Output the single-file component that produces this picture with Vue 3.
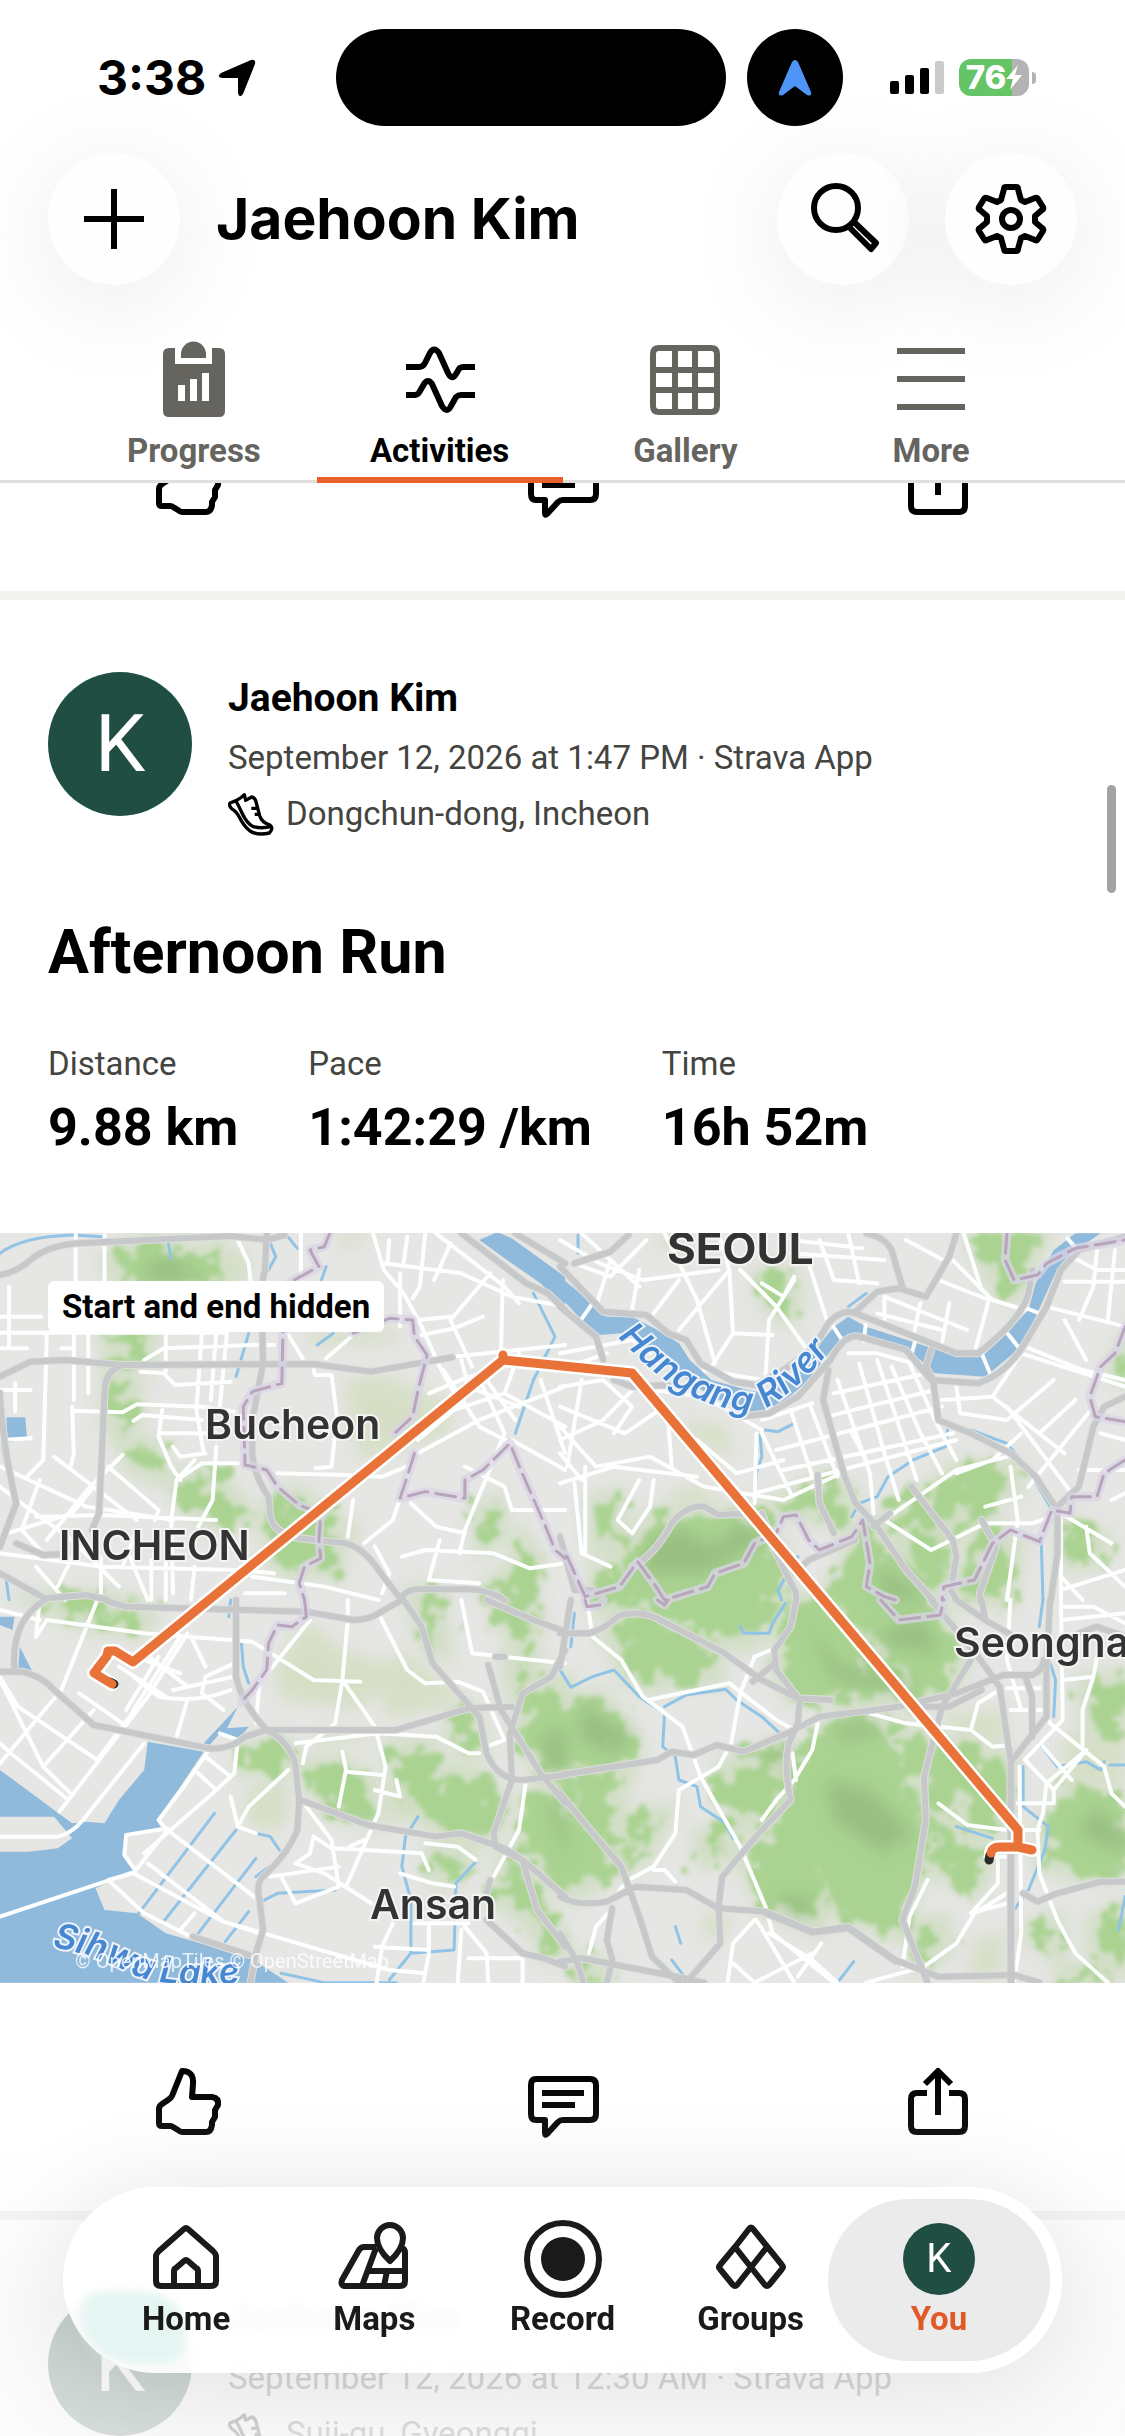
<template>
  <div class="app">
    <!-- Status bar -->
    <div class="status">
      <div class="status-left">
        <span class="clock">3:38</span>
        <svg class="loc" viewBox="0 0 38 38" aria-hidden="true">
          <path d="M33 1Q38 0 37 5L25 35Q21 40 20 34V19H4Q-2 18 3 14Z" />
        </svg>
      </div>
      <div class="status-mid">
        <div class="island"></div>
        <div class="nav-dot">
          <svg viewBox="0 0 34 36" aria-hidden="true">
            <path d="M14 2Q17-2 20 2L33 32Q34 37 29 35L17 26 5 35Q0 37 1 32Z" fill="#4e95f7" />
          </svg>
        </div>
      </div>
      <div class="status-right">
        <svg class="signal" viewBox="0 0 54 33" aria-hidden="true">
          <rect x="0" y="20" width="9" height="13" rx="2" />
          <rect x="15" y="14" width="9" height="19" rx="2" />
          <rect x="30" y="7" width="9" height="26" rx="2" />
          <rect x="45" y="0" width="9" height="33" rx="2" fill="#cbcbcb" />
        </svg>
        <div class="battery">
          <span>76</span>
          <svg viewBox="0 0 16 25" aria-hidden="true"><path d="M12 0L0 14H7L4 25 16 10H9Z" fill="#fff" /></svg>
        </div>
        <div class="battery-tip"></div>
      </div>
    </div>

    <!-- Header -->
    <header class="header">
      <button class="round" type="button" aria-label="Add">
        <svg class="icon" viewBox="0 0 72 72"><path d="M36 6V66M6 36H66" /></svg>
      </button>
      <h1>Jaehoon Kim</h1>
      <button class="round" type="button" aria-label="Search">
        <svg class="icon" viewBox="0 0 72 72">
          <circle cx="29" cy="25" r="22" />
          <path d="M48 40L69 60 64 66 43 45" />
        </svg>
      </button>
      <button class="round" type="button" aria-label="Settings">
        <svg class="icon" viewBox="0 0 72 72">
          <path d="M31 4H41Q43 4 43 6L46 17 50 19 60 15Q62 14 63 16L68 24Q69 26 67 27L60 33V39L67 45Q69 46 68 48L63 56Q62 58 60 57L50 53 46 55 43 66Q43 68 41 68H31Q29 68 29 66L26 55 22 53 12 57Q10 58 9 56L4 48Q3 46 5 45L12 39V33L5 27Q3 26 4 24L9 16Q10 14 12 15L22 19 26 17 29 6Q29 4 31 4Z" />
          <circle cx="36" cy="36" r="9" />
        </svg>
      </button>
    </header>

    <!-- Tabs -->
    <nav class="tabs">
      <button
        v-for="tab in tabs"
        :key="tab.name"
        type="button"
        class="tab"
        :class="{ active: tab.name === activeTab }"
        @click="activeTab = tab.name"
      >
        <svg class="tab-icon" viewBox="0 0 78 78" aria-hidden="true">
          <path :d="tab.path" :class="tab.solid ? 'solid' : 'line'" fill-rule="evenodd" />
        </svg>
        <span>{{ tab.name }}</span>
      </button>
    </nav>

    <!-- Feed -->
    <main class="feed">
      <div class="actions previous">
        <button v-for="a in actions" :key="a.name" type="button" :aria-label="a.name">
          <svg class="icon" viewBox="0 0 72 72"><path :d="a.path" /></svg>
        </button>
      </div>

      <article v-for="post in posts" :key="post.id" class="card">
        <div class="author">
          <div class="avatar">K</div>
          <div class="meta">
            <strong>Jaehoon Kim</strong>
            <p>{{ post.date }}</p>
            <p class="place">
              <svg class="shoe" viewBox="24 21 138 132" aria-hidden="true">
                <path d="M30 54L50 46Q62 40 73 29L77 46 95 36Q106 38 109 54L119 92Q125 112 150 120 162 130 148 144 112 152 90 138 70 122 58 96 48 78 36 72 26 64 30 54ZM48 48Q56 62 66 84 80 114 98 124 122 132 152 125M94 70H112M104 88H118" />
              </svg>
              {{ post.place }}
            </p>
          </div>
        </div>

        <template v-if="post.title">
          <h2>{{ post.title }}</h2>
          <dl class="stats">
            <div v-for="s in post.stats" :key="s.label">
              <dt>{{ s.label }}</dt>
              <dd>{{ s.value }}</dd>
            </div>
          </dl>

          <div class="map">
            <span class="hidden-badge">Start and end hidden</span>
            <svg viewBox="0 0 1125 750" role="img" aria-label="Route map">
              <defs>
                <filter id="rough" x="-5%" y="-5%" width="110%" height="110%" color-interpolation-filters="sRGB">
                  <feTurbulence type="fractalNoise" baseFrequency="0.04" numOctaves="4" seed="4" />
                  <feDisplacementMap in="SourceGraphic" scale="64" xChannelSelector="R" yChannelSelector="G" />
                  <feGaussianBlur stdDeviation="2" />
                </filter>
                <filter id="soft"><feGaussianBlur stdDeviation="8" /></filter>
                <path id="hangang" d="M618 104C660 148 690 172 754 180" />
                <path id="river" d="M766 175C795 158 815 138 848 94" />
                <path id="sihwa" d="M52 714Q96 722 130 740T260 748" />
              </defs>
              <rect width="1125" height="750" fill="#e6e6e4" />
              <g v-for="layer in layers" :key="layer" :class="layer" :filter="layerFilter[layer]">
                <g v-for="(tile, i) in tiles" :key="i" :transform="tile.at">
                  <path :d="tile[layer]" />
                </g>
              </g>
              <g class="city">
                <text x="667" y="31" class="big">SEOUL</text>
                <text x="205" y="206">Bucheon</text>
                <text x="59" y="327">INCHEON</text>
                <text x="954" y="424">Seongnam</text>
                <text x="370" y="686">Ansan</text>
              </g>
              <g class="water-name">
                <text><textPath href="#hangang">Hangang</textPath></text>
                <text><textPath href="#river">River</textPath></text>
                <text><textPath href="#sihwa">Sihwa Lake</textPath></text>
              </g>
              <text class="credit" x="75" y="735">© OpenMapTiles © OpenStreetMap</text>
              <path class="casing" :d="route" />
              <path class="hidden-part" d="M110 449L114 451M990 622L989 627" />
              <path class="route" :d="route" />
            </svg>
          </div>

          <div class="actions">
            <button v-for="a in actions" :key="a.name" type="button" :aria-label="a.name">
              <svg class="icon" viewBox="0 0 72 72"><path :d="a.path" /></svg>
            </button>
          </div>
        </template>
      </article>
    </main>

    <div class="scrollbar"></div>
    <div class="fade"></div>

    <!-- Bottom navigation -->
    <nav class="dock">
      <div class="tint"></div>
      <a
        v-for="item in dock"
        :key="item.name"
        href="#"
        :class="{ current: item.name === 'You' }"
      >
        <svg v-if="item.path" class="icon" viewBox="0 0 72 72" aria-hidden="true">
          <path :d="item.path" />
          <circle v-if="item.name === 'Record'" cx="36" cy="36" r="22" fill="#1a1a1a" stroke="none" />
        </svg>
        <div v-else class="avatar small">K</div>
        <span>{{ item.name }}</span>
      </a>
    </nav>
  </div>
</template>

<script setup>
import { ref } from 'vue';

const activeTab = ref('Activities');

const tabs = [
  {
    name: 'Progress',
    solid: true,
    path: 'M14 7H20V23H57V7H64Q70 7 70 13V70Q70 76 64 76H14Q8 76 8 70V13Q8 7 14 7ZM26 17V13A12.5 12.5 0 0 1 51 13V17ZM23 44H30V60H23ZM35 38H42V60H35ZM47 32H54V60H47Z',
  },
  {
    name: 'Activities',
    path: 'M5 26H18Q22 26 24 22L29 12Q33 5 38 12L47 32Q51 40 55 33L58 28Q59 26 63 26H74M5 54H14Q17 54 19 50L23 43Q27 37 31 43L41 65Q46 73 50 65L55 56Q57 54 60 54H74',
  },
  {
    name: 'Gallery',
    path: 'M13 7H65Q71 7 71 13V65Q71 71 65 71H13Q7 71 7 65V13Q7 7 13 7ZM7 29H71M7 49H71M29 7V71M49 7V71',
  },
  { name: 'More', path: 'M5 10H73M5 38H73M5 66H73' },
];

const actions = [
  {
    name: 'Like',
    path: 'M7 42Q7 39 10 37L16 33Q19 31 20 29L30 4Q42 4 41 17L40 30H60Q67 31 66 38L63 43V50L60 55V58Q59 65 54 65H30Q28 65 26 63L21 60Q20 59 18 59H10Q7 59 7 56Z',
  },
  {
    name: 'Comment',
    path: 'M9 12H63Q69 12 69 18V47Q69 53 63 53H36Q33 53 31 55L20 67Q18 69 18 66V53H9Q4 53 4 47V18Q4 12 9 12ZM15 26H57M15 38H48',
  },
  {
    name: 'Share',
    path: 'M25 26H15Q9 26 9 32V59Q9 65 15 65H57Q63 65 63 59V32Q63 26 57 26H47M36 48V5M23 17L36 4 49 17',
  },
];

const dock = [
  {
    name: 'Home',
    path: 'M34 6Q36 4 38 6L63 28Q66 31 66 33V58Q66 63 61 63H11Q6 63 6 58V33Q6 31 9 28ZM24 63V48Q24 46 26 45L34 38Q36 36 38 38L46 45Q48 46 48 48V63',
  },
  {
    name: 'Maps',
    path: 'M38 24H26Q23 24 21 27L4 57Q2 63 8 63H62Q67 63 67 58V30Q67 26 64 25M52 38Q39 26 39 15A13 13 0 0 1 65 15Q65 26 52 38ZM38 25L24 63M31 48H67M49 48L46 63',
  },
  { name: 'Record', path: 'M36 0A36 36 0 1 1 36 72A36 36 0 1 1 36 0Z' },
  {
    name: 'Groups',
    path: 'M20 24L34 6Q36 3 38 6L67 42Q69 44 67 46L54 62Q52 64 50 62L20 24M52 24L22 62Q20 64 18 62L5 46Q3 44 5 42L20 24',
  },
  { name: 'You' },
];

const posts = [
  {
    id: 1,
    date: 'September 12, 2026 at 1:47 PM · Strava App',
    place: 'Dongchun-dong, Incheon',
    title: 'Afternoon Run',
    stats: [
      { label: 'Distance', value: '9.88 km' },
      { label: 'Pace', value: '1:42:29 /km' },
      { label: 'Time', value: '16h 52m' },
    ],
  },
  {
    id: 2,
    date: 'September 12, 2026 at 12:30 AM · Strava App',
    place: 'Suji-gu, Gyeonggi',
  },
];

const route = 'M112 451L94 440 107 423 108 418 115 418 133 429 503 127V122V127L632 140 1018 597V614L1032 617 1018 614H1000Q992 614 991 620';

// Map layers, from the ground up
const layers = ['pale', 'forest-haze', 'forest', 'shade', 'water', 'stream', 'street', 'highway-edge', 'highway', 'border-glow', 'border'];
const layerFilter = {
  pale: 'url(#soft)',
  'forest-haze': 'url(#soft)',
  forest: 'url(#rough)',
  shade: 'url(#soft)',
};

const tile = (at, t) => ({
  at,
  ...t,
  'forest-haze': t.forest,
  'highway-edge': t.highway,
  'border-glow': t.border,
});

const tiles = [
  // north-west
  tile('translate(0 -13) scale(.3604 .3333)', {
    pale: 'M930 40H1030L960 95ZM950 490L1040 460 1240 540 1250 640 1000 720ZM900 880L1000 900 1000 980ZM620 80L700 110 690 180 620 180ZM850 330H1120L1080 370 860 370Z',
    forest: 'M300 130L370 75 480 70 550 110 600 75 600 140 630 190H340ZM290 335H420L410 425 310 400ZM310 460L380 500 360 560 380 590 330 650 300 590ZM360 675L430 680 450 770 365 740ZM500 780L560 760 630 800 690 900 580 910 500 830ZM750 850L830 820 900 890 940 980 930 1060 880 1040 810 1060 750 1010ZM1330 880L1375 850 1390 940 1340 980ZM1350 1110L1430 1040 1450 960 1490 1030 1460 1150 1380 1140ZM130 1140H300L400 1170H200ZM1150 1120H1220V1145H1150Z',
    shade: 'M410 130L480 110 560 180H410Z',
    water: 'M1330 60L1380 36 1420 55 1568 170V270L1500 190 1400 115ZM18 592H70L75 655 18 668Z',
    stream: 'M0 100Q60 50 200 45L285 50M465 60L475 115M750 70L765 110 745 150M795 45L825 85M905 140L890 185M925 340L880 375M655 470L690 340M0 620L10 700 40 850M15 1060L25 1140M1480 220L1540 350 1480 480 1430 640',
    street: 'M130 340L120 720 75 770M0 290H115M0 338H630M25 200V385M42 490V575M0 510H85M210 40V180M290 45V180M205 335V540M170 385H205V340M200 572L340 577 380 553 560 560 650 575M370 603L395 585 560 600M245 340V520M400 420L455 385 700 375 760 375M390 455L455 460 485 495 640 485M460 340V455M560 340L545 570 565 700M600 340L585 540M630 335L610 560M450 640H600M450 570L440 650 475 740 500 780M200 560L205 700 195 745M660 60L690 130 695 180M835 40V190M1035 40L1065 150 1120 220 1170 320 1220 440 1280 560M1110 160V320M1065 130L1280 160 1420 230 1568 260M1180 40L1165 200 1145 235M1080 60L1075 130M1130 50L1120 130M1360 160L1250 300 1310 440M1210 40L1400 200 1440 250M1250 70L1205 180M1395 180L1390 400M1255 410L1568 375M1170 345L1260 325 1340 290M1160 300L1250 290M800 345L840 415M980 345L905 415M870 450L875 465 920 465 935 590 920 740 875 745M770 760L960 765 1060 770 1140 735M1160 700L1330 600 1568 500M1190 520L1290 475 1400 440M980 840L965 950M1140 850L1210 920 1290 940M1340 500L1400 640 1290 930 1275 1000M1010 970L1090 900 1140 740M1115 1010L1180 990 1370 1000 1470 1045 1568 1030M1040 980L1080 1060 1060 1120M0 740L100 790 240 860 480 900M0 800L60 850 200 960 330 1100M110 780L60 930 120 1000M300 740L440 870 430 900M340 705L250 800 130 960M150 710L380 900M540 720L490 780 475 900 480 1120M490 780L560 730H660M600 680L590 840 550 920M100 890L280 885 600 900M0 1000L280 1040 660 1050 760 1060M360 1010L410 1140M420 1020V1140M460 1000V1140M540 1040L530 1140M20 940L200 880 260 800M680 1120H790M100 1040L180 1140M700 1070L900 1100 1050 1140M0 385H75M0 660L85 655M480 680L500 710 570 700M1420 660L1568 750M1160 660L1260 570 1400 520M1290 740L1400 800 1420 870 1568 870M1500 480L1568 700M1430 600L1350 480M1230 450L1330 620 1420 670M1280 420L1300 500 1440 560M1440 400L1400 520 1568 620M1220 960L1190 1080 1330 1090M380 930L340 1040M220 970L160 1100M280 1010V1130',
    highway: 'M0 165Q50 155 90 115 140 75 220 70L640 48 740 60 790 45M740 40L735 150 725 200 730 430 700 600V700Q705 770 745 830L750 890Q760 940 830 955L960 970Q1010 985 1050 1050L1110 1135M0 470L85 425 180 420 340 435 870 432 1030 455 1255 412M340 435Q290 450 290 520L275 880 255 930M1280 40L1340 90 1460 190 1520 220 1568 270M1430 40L1568 130M0 1060L125 1135M45 970L120 1005 165 1003M0 520Q5 660 45 850L0 980M1110 1135Q1130 1108 1160 1108H1300Q1360 1110 1400 1140M125 1135L240 1125 300 1140',
    border: 'M915 40L900 80 860 90 885 140 850 160 800 190 785 335 782 490 700 515 675 560 680 735 740 750 770 800 830 855 890 880 885 960 890 1015 845 1040 830 1090 845 1140M980 340L1080 295 1145 300 1150 350 1185 405 1160 510 1145 590 1095 640M1150 700L1130 770 1110 835 1180 815 1290 835 1290 780 1340 750 1415 670 1445 750 1510 910 1540 990 1568 1015',
  }),
  // north-east
  tile('translate(560 -13) scale(.3604 .3333)', {
    pale: 'M960 930L1160 880 1180 960 1000 1000ZM300 820L400 790 420 860 300 860ZM330 600L460 620 480 720 380 660ZM250 60L340 40 330 110Z',
    forest: 'M190 980L260 890 350 890 540 880 600 980 620 1060 600 1160 120 1160 160 1080ZM100 850L160 830 175 1000 100 980ZM600 850L740 780 810 820 780 900 640 880ZM900 900L1000 830 1100 750 1250 740 1260 810 1150 880 980 940ZM555 175L600 160 650 180 640 290 590 270ZM1150 60L1230 40H1340L1310 120 1270 230 1200 180ZM800 950L860 930 970 1060 1040 1160H760L740 1120 800 1050ZM960 960L1060 960 1090 1070 1010 1110ZM1200 920L1270 970 1240 1140H1110L1130 1060ZM1400 900L1510 960 1490 1020 1410 1030ZM1530 450L1575 370V480ZM100 1060H150V1130H100Z',
    shade: 'M240 980L330 920 420 980 520 900 560 960 400 1060 240 1060ZM880 1040L960 1090 1020 1140H900Z',
    water: 'M0 170L90 250 130 290 200 290 270 330 330 370 360 420 420 480 520 510 570 520 640 470 700 400 760 320 800 290 850 320 1020 380 1170 410 1220 360 1300 270 1320 190 1370 90 1430 40H1500L1420 100 1370 170 1320 290 1280 380 1180 470 1040 460 1000 420 960 395 860 350 800 345 760 380 690 480 600 565 530 575 420 530 330 460 260 390 170 340 110 345 60 300 0 230Z',
    stream: 'M570 630L605 635 650 610M555 645L560 710 545 760 540 830M1075 630L1070 680 980 720 910 770 880 830 830 850 810 890M1140 630L1240 670 1300 750 1360 860M1335 950L1340 1140M660 1010L605 1110 615 1140M50 45V100M800 260L850 220',
    street: 'M90 250L55 305M755 315L780 355M848 315L843 365M985 365L975 405M1172 405L1195 465M1238 335L1278 390M1288 262L1335 282M1408 55L1440 95M640 570L700 770M695 560L770 770M770 480L860 760 870 880M830 430L900 700 940 840M880 420L990 780M920 440L1000 640 1060 760M970 430L1040 600 1100 720M800 400L880 400 980 430M560 600L700 550M600 690L1060 560M620 750L1090 640M760 520L1020 460M740 590L1040 510M540 820L780 750 1100 660M545 640L540 850M560 640L640 820M810 640L850 720M1060 540L1200 530 1280 400 1568 500M1100 500L1110 580 1240 600 1370 480M1240 560L1420 820M1200 530L1400 700M1290 380L1450 450 1568 480M1350 260L1568 320M1400 185H1568M1490 90L1480 200 1440 300M1568 150H1490L1420 110M1430 540L1330 640M1480 560L1300 800M1280 640L1200 720 1100 760M1400 300L1460 420M1540 90L1520 300M0 60L110 130 230 180 440 150M60 40L220 200M140 120L100 260M220 150L200 270M290 40L380 240 430 430M440 40L470 150 400 240 330 330M470 150L480 340 590 345M500 150L600 260 680 380M560 190L620 230 650 170M650 180L580 300 570 470M720 60L760 180 880 190M640 100L900 120M800 40L830 190M690 130L740 300M640 60L840 85M900 230L1130 330M880 280L1060 330M1000 250L980 350M900 240V310M1080 110L1200 240 1290 270M1120 40L1170 210M960 60L1080 130M1050 180L1190 240 1150 400M1080 250L1060 370M400 450L560 480M240 60L140 170 40 130M330 180L260 280M480 340L420 440M0 400L200 360 250 400M0 450L130 400M0 500L120 480 200 560 150 640M0 560L180 640 290 560M60 480L20 740M0 620L100 740 250 710 400 800 620 840M300 600L310 740M260 510L400 530 560 630M0 790L150 740 380 770M0 660L120 600 210 500M0 700L60 780M40 790L60 1000 140 1040M70 740V1000M220 780L160 900 200 940 250 860 260 780M380 660L490 760 620 720M620 840L780 760M1100 750L900 900 1030 990 1180 910H1310L1390 880 1530 970M1100 750L1240 710M1250 740L1270 900 1240 1140M1180 860L1280 830M1390 1110L1568 1050M1460 920L1470 1000 1568 1100M1440 750H1568M1500 640L1568 660M1390 880V1140M1390 1070L1450 1140M1530 840L1568 820',
    highway: 'M0 140L120 275 240 285 300 340 350 360 390 430 480 485 545 495 620 450 700 390 745 310Q780 265 820 280L1100 400H1160Q1280 300 1300 220L1310 150M0 260L100 350 120 420M500 590L580 580 660 530 750 420Q790 340 830 350L960 390 1030 480 1160 490Q1240 460 1290 370L1350 260 1390 150 1440 90 1568 50M1030 390L1015 440 1035 480 1050 600 1140 640 1250 700 1320 770 1380 870M1100 40L1080 110 1015 230 940 205 880 215 820 275M850 40Q900 50 920 90L950 200M40 130L140 95 190 45M745 450L730 540 790 770 820 850 880 920 960 1050 1035 1140M715 765L720 850 760 940M975 800L1090 960 1100 1010 1085 1110 1100 1140M1170 900L1210 980 1165 1120V1140M1568 530L1510 560 1480 620 1440 800 1380 860V1000L1362 1140M915 880L870 920M150 480L200 500 300 495M200 1040Q260 1010 310 910 350 855 400 860L440 885 520 880M560 880L600 1000 655 1120V1140M820 960L690 1020 650 1060M0 950L40 1110H90',
    border: 'M1240 40L1235 120 1260 180 1325 165 1350 130 1430 85 1568 60M1568 320L1540 400 1500 440 1470 530 1485 590 1568 605M1568 720L1510 760 1490 830 1420 830 1415 880 1365 870 1330 965 1250 930 1200 970 1150 1080 1065 1100 1060 1140M930 1140L900 1130 850 1100 860 1030 840 900 810 950 720 990 690 960 655 885 620 890 600 940 540 970 510 1030 430 1060 410 1100 290 1140 260 1090 215 1025 165 1100 70 1130 20 1010 0 1000',
  }),
  // south-west
  tile('translate(0 367) scale(.3604 .3333)', {
    pale: 'M680 570L800 540V650L760 700 680 660ZM850 60L950 150 1100 200 1000 330 780 300 760 200ZM1030 200L1130 160 1290 300 1080 360ZM870 400L1030 390 1030 420 870 440ZM1060 580L1150 580 1150 660H1060Z',
    forest: 'M110 5L230 0 300 40 410 50 400 85 270 80 180 45ZM690 450L780 425 810 490 740 515 680 495ZM845 500L940 490 1030 540 1030 660 900 620ZM1090 440L1190 435 1200 540 1280 500 1390 590 1360 710 1230 700 1120 600ZM1260 350L1310 340 1330 450 1260 420ZM1150 0H1210L1230 150 1180 120ZM1370 0H1470L1490 80 1440 150 1400 60ZM1410 190L1480 170 1490 230 1420 260ZM1450 290L1568 250V500L1500 520 1430 390ZM1200 760L1300 770 1260 840 1200 830ZM1460 600L1568 560V860L1450 740ZM1400 780L1460 820 1568 1050 1520 1060 1460 950 1380 900Z',
    shade: 'M1500 400L1568 390V510H1520ZM1520 600L1568 650V780Z',
    water: 'M0 510L200 670 240 665 290 670 330 600 400 510 410 425 565 455 500 560 435 660 450 690 350 705 345 765 375 810 265 865 290 930 380 940 460 1000 690 1070 800 1148H0V755H80L160 745 200 715 150 650H0ZM565 430L660 320 630 385 690 380 665 415 610 400 570 450ZM0 50H40L35 90 0 75ZM55 140L90 215H50Z',
    stream: 'M595 640L385 940M655 690L450 970M710 775L550 1000M690 935L625 1025M670 130L675 200 690 250M725 905L770 880 930 870M1160 650L1125 710 1115 800 1140 900V1060L1080 1140M1140 1060L1260 1050 1265 850 1320 785M710 700L750 710 775 750M640 0L635 50M710 830L760 790M780 1120L900 1148H1100',
    street: 'M0 950L375 815M0 230L50 320 270 480M0 240L120 500 200 585M0 430L30 460 190 600M0 490L170 270 270 0M220 280L340 370M120 500L260 330M270 480L380 320M165 635L410 290 520 100M0 710H160Q200 700 230 660L400 430M100 110L130 60 400 100 700 125 870 240 1000 245M100 110L110 0M0 30L110 60M400 180L500 220M370 230L440 290Q550 310 640 270M330 200L460 290M440 170L350 330M500 110L370 330M390 150L520 260M520 300L490 410M650 190L570 230 560 280 620 330M530 110L570 200M650 230L480 270M860 60L720 250 710 370M965 0V60L950 240 1040 380 1070 500 1050 640 960 860M1050 40L1130 210 1180 250 1270 245 1340 275 1400 420 1350 440M1280 0L1310 160 1568 190M820 430L1050 400 1210 410 1300 460H1330M950 455L960 510 940 620M960 515L1060 525M1100 540L1110 590 1040 570M580 450L510 560 440 660 465 690 370 820 620 965 1080 1110 1180 1120M465 690L705 890M610 400L660 420 650 520 590 580 400 760M570 470L640 530M540 510L600 570M800 510L740 570 690 620 660 680 640 590M660 680L710 700M850 620L920 720 940 860 820 910 780 830M920 745L870 710 860 760 820 790M820 790L900 820 1030 910M750 830L940 800M930 745L1170 760 1190 810M1110 820L1200 850 1260 860M370 820L300 840 400 940 530 1010M465 685L350 705 345 765 375 810M410 790L620 965 720 1000M540 940L500 990M1180 730L1270 740 1320 780M1460 540L1440 690 1370 830M1090 970L1060 1040 1045 1148M1190 970V1060L1175 1148M1290 980L1350 1060 1355 1148M1150 970H1300M1300 1075H1450V1148M1040 1040L1190 1050M1280 990L1270 1148M950 240L930 370 850 440 840 490M1010 720L970 740',
    highway: 'M0 215H60Q120 230 150 270L260 375 580 445Q640 450 680 410L740 390H1100L1300 325 1420 320M40 210Q30 60 125 0M300 5L350 20 850 35 980 60Q1020 60 1050 40L1115 0M655 0V230Q670 310 740 390 810 430 820 500L830 600 825 690Q800 760 730 830 710 850 720 900L730 990 710 1060 695 1148M835 600L1020 675 1210 710 1280 700 1400 745 1450 780 1568 890M1120 0L1170 80 1200 190 1330 350 1350 460Q1380 540 1450 540L1568 525M1355 195L1390 330 1500 520 1568 610M1350 0L1480 60 1568 95M1568 150L1530 230 1450 280 1415 400 1420 540 1370 700 1375 740 1450 780 1490 930 1568 1040M535 1010L690 1065M1350 960L1450 1060 1510 1075 1568 1100M1375 170H1400M1360 840L1350 880',
    border: 'M845 0L850 50 810 80 770 75 745 130 740 210 700 270 670 305',
  }),
  // south-east
  tile('translate(560 367) scale(.3604 .3333)', {
    pale: 'M390 940L480 950 450 1020 400 1010ZM1060 340L1240 330 1240 430 1100 420ZM1400 400L1568 420 1568 560 1400 540ZM1150 1020L1230 1000 1230 1130 1130 1130ZM480 90L560 90 540 160 480 160Z',
    forest: 'M650 500L740 380 860 350 930 390 960 500 980 400 1030 430 1010 540 930 590 1010 620 980 850 940 1000 820 960 770 930 740 830 710 980 580 920 510 790 640 620ZM520 480L620 440 630 580 520 680 450 590 450 500ZM130 100L170 50 260 40 440 150 430 240 350 230 260 260 190 230ZM250 0H630L590 80 480 110 420 120ZM640 0H740L990 300 650 290 600 200ZM760 0H1020L1120 180 1060 290 1000 290 880 130ZM0 260L60 330 110 290 200 400V480L0 520ZM0 540L190 500 150 640 170 770 80 690ZM0 590L80 690 160 800 50 880 0 850ZM200 660L290 640 240 760 180 790ZM390 710L460 690 480 750 400 780ZM1050 430L1250 480 1240 660 1180 690 1030 580ZM1010 640L1130 700 1190 760 1160 870 1020 800ZM1350 660L1420 550 1568 620V820L1440 820 1340 790ZM1450 250L1568 230V400L1470 390ZM980 980L1060 970V1060L1000 1090ZM1480 970L1568 930V1110L1490 1070ZM1300 1000L1370 960 1380 1060ZM60 1100H120V1148H60ZM1400 1120H1500V1148H1400Z',
    shade: 'M740 540L860 570 980 700 900 760 760 660ZM680 60L780 200 960 230 980 280 760 240ZM560 450L620 440V520ZM60 310L200 410 150 460 60 420ZM880 100L1000 60 1060 160 920 140ZM1480 620L1568 700 1568 760 1440 700ZM640 880L700 900 690 960 600 910ZM760 380L860 370 900 400 780 420Z',
    water: '',
    stream: 'M0 210L30 262 90 230 150 210 220 290 290 340 285 440 320 470 330 540 380 560 390 620 460 670 480 715M290 320L350 285 460 268 490 300 560 350 620 410M500 80L510 100H580L590 70 625 10M1360 190L1375 240 1370 350M1330 430L1380 500 1460 485 1500 510 1510 485M1525 495H1568M1285 500V620L1355 680 1345 750 1300 870 1260 930M1100 680L1200 715M320 980L335 1030M310 1080L345 1130M770 1148L815 1085M1568 890L1550 990M1340 0L1330 80M40 40L30 140',
    street: 'M75 0L90 110 170 180 230 290 340 380 390 530 500 740 570 920 590 1000 760 1148M245 300L470 250 600 360 640 385M585 150L540 170 500 280 475 430 440 500 330 570 320 700 260 800 190 840 165 870M260 810L290 810 320 845M715 370L700 450 650 540 600 600 560 660M645 460L655 540M860 340L960 370 1140 390 1200 440 1250 435M1140 390L1160 310 1220 270M1050 610L1130 675 1240 690 1330 690M1275 500L1280 1000 1260 1148M1390 0L1395 360 1290 480M1360 370L1510 500 1530 580 1568 620M1290 480L1370 570 1460 450M1460 450L1350 550 1340 640 1325 690 1330 820 1380 960 1430 1060 1520 1148M1340 440L1420 540M1395 240L1480 230 1450 330V440M1480 230L1490 170M1240 880L1150 940 1100 1030 1010 1100 850 1148M1215 780V850L1140 940 1240 910M1020 840L970 950 950 1100M540 960L480 1030 465 1148M545 960L650 1148M480 1090L540 1148M700 1060L540 1148M580 1000L700 1080 770 1148M725 1030L660 1130M150 920L100 980 80 1060M1390 60L1568 40M1390 20H1480L1568 70M1250 0L1240 180 1280 330M1250 330H1340L1360 370M1240 265H1330M1270 610H1370V570M1240 770H1180',
    highway: 'M0 100H80Q120 90 160 50 200 30 260 50L450 155 560 240 660 295 750 300M655 0L640 80 595 150 600 210 665 300 660 370 635 430Q620 500 640 600L560 690 450 830 440 920 445 1030 350 1148M595 190L535 245M0 525L270 480 310 455 370 465 435 435 510 455 640 395 720 350 940 320 1100 280 1230 225H1310Q1340 210 1342 180M1030 0L1160 170 1220 260 1250 480V1148M1252 480V1148M1170 0L1180 60 1260 110M1100 0L1180 60M1140 180L1060 320 1010 530 1015 660 985 860 950 960 1020 1148M1360 0L1350 200V350L1255 480M1290 225L1310 290V410M1000 320H1080L1170 270M0 580L80 685 170 800 220 950 255 1070 330 1148M0 890Q50 920 130 905L210 860 350 870 440 925 570 935 700 995 800 980 930 1080 1050 1130 1260 1125 1330 1148M570 940L700 998 800 985 930 1084M0 1000L45 1080 65 1148M0 1085L60 1075 300 1125 400 1148M145 925L130 1020 145 1080 130 1148M1285 880L1325 905 1380 880 1500 845H1568M0 200L30 0M1440 100L1490 80 1568 110',
    border: 'M70 0L75 20 110 15 120 0M270 0L290 15 300 0M890 0L940 60 1055 45 1065 0',
  }),
];
</script>

<style>
body {
  margin: 0;
  background: #fff;
}
</style>

<style scoped>
.app {
  position: relative;
  display: flex;
  flex-direction: column;
  height: 100vh;
  overflow: hidden;
  background: #fff;
  color: #000;
  font-family: Roboto, "Noto Sans", sans-serif;
}

button {
  border: 0;
  padding: 0;
  background: none;
  color: inherit;
  font: inherit;
  cursor: pointer;
}

p, h1, h2, dl, dd {
  margin: 0;
}

.icon {
  display: block;
  width: 72px;
  height: 72px;
  overflow: visible;
  fill: none;
  stroke: #000;
  stroke-width: 6;
  stroke-linejoin: round;
}

/* Status bar */
.status {
  display: grid;
  grid-template-columns: 336fr 507px 282fr;
  align-items: center;
  flex: none;
  height: 97px;
  padding: 29px 0 27px;
  font-family: Inter, sans-serif;
}

.status-left,
.status-mid,
.status-right {
  display: flex;
  align-items: center;
}

.status-left {
  gap: 12px;
  padding-left: 97px;
}

.clock {
  font-size: 48px;
  line-height: 60px;
  font-weight: 700;
}

.loc {
  width: 38px;
  height: 38px;
}

.status-mid {
  gap: 21px;
}

.island {
  width: 391px;
  height: 97px;
  border-radius: 49px;
  background: #000;
}

.nav-dot {
  display: flex;
  align-items: center;
  justify-content: center;
  width: 96px;
  height: 97px;
  border-radius: 50%;
  background: #000;
}

.nav-dot svg {
  width: 34px;
  height: 36px;
}

.status-right {
  padding-left: 47px;
}

.signal {
  width: 54px;
  height: 33px;
  margin-right: 15px;
}

.battery {
  display: flex;
  align-items: center;
  justify-content: center;
  width: 70px;
  height: 37px;
  border-radius: 12px;
  background: linear-gradient(90deg, #65c466 53px, #b3b3b3 53px);
  color: #fff;
  font-size: 33px;
  line-height: 37px;
  font-weight: 800;
}

.battery svg {
  width: 16px;
  height: 25px;
}

.battery-tip {
  width: 4px;
  height: 12px;
  margin-left: 3px;
  border-radius: 0 6px 6px 0;
  background: #b3b3b3;
}

/* Header */
.header {
  display: flex;
  align-items: center;
  gap: 36px;
  flex: none;
  padding: 0 48px;
}

.header h1 {
  flex: 1;
  font-family: Inter, sans-serif;
  font-size: 57px;
  line-height: 72px;
  font-weight: 700;
}

.round {
  display: flex;
  align-items: center;
  justify-content: center;
  width: 132px;
  height: 132px;
  border-radius: 50%;
  background: #fefefe;
  box-shadow: 0 16px 110px rgba(0, 0, 0, 0.09);
}

/* Tabs */
.tabs {
  position: relative;
  z-index: 1;
  display: flex;
  flex: none;
  padding: 56px 71px 0;
  box-shadow: inset 0 -3px #dfdfdd;
}

.tab {
  display: flex;
  flex: 1;
  flex-direction: column;
  align-items: center;
  gap: 12px;
  padding-bottom: 6px;
  border-bottom: 6px solid transparent;
  color: #65645f;
  font-size: 33px;
  line-height: 40px;
  font-weight: 700;
}

.tab.active {
  border-color: #e8602c;
  color: #000;
}

.tab-icon {
  width: 78px;
  height: 78px;
}

.tab-icon .solid {
  fill: currentColor;
}

.tab-icon .line {
  fill: none;
  stroke: currentColor;
  stroke-width: 6;
}

/* Feed */
.feed {
  flex: 1;
  overflow: hidden;
  min-height: 0;
}

.actions {
  display: flex;
  padding: 84px 0 72px;
  border-bottom: 9px solid #f2f2f0;
}

.actions.previous {
  margin-top: -120px;
}

.actions button {
  display: flex;
  flex: 1;
  justify-content: center;
}

.card {
  padding-top: 72px;
}

.author {
  display: flex;
  gap: 36px;
  padding: 0 48px;
}

.avatar {
  display: flex;
  align-items: center;
  justify-content: center;
  flex: none;
  width: 144px;
  height: 144px;
  border-radius: 50%;
  background: #204e43;
  color: #fff;
  font-size: 80px;
  font-weight: 400;
}

.avatar.small {
  width: 72px;
  height: 72px;
  font-size: 40px;
}

.meta strong {
  display: block;
  margin-bottom: 6px;
  font-size: 39px;
  line-height: 52px;
}

.meta p {
  color: #444440;
  font-size: 33px;
  line-height: 56px;
  white-space: nowrap;
}

.meta .place {
  display: flex;
  align-items: center;
  gap: 12px;
}

.shoe {
  width: 46px;
  height: 44px;
  fill: none;
  stroke: #000;
  stroke-width: 10;
  stroke-linejoin: round;
}

h2 {
  margin-top: 74px;
  padding: 0 48px;
  font-size: 61px;
  line-height: 72px;
  font-weight: 700;
}

.stats {
  display: flex;
  gap: 70px;
  padding: 54px 48px 75px;
}

.stats dt {
  margin-bottom: 12px;
  color: #444440;
  font-size: 33px;
  line-height: 44px;
}

.stats dd {
  font-size: 52px;
  line-height: 60px;
  font-weight: 700;
}

/* Map */
.map {
  position: relative;
}

.map svg {
  display: block;
  width: 100%;
}

.hidden-badge {
  position: absolute;
  z-index: 1;
  top: 48px;
  left: 48px;
  padding: 0 14px;
  border-radius: 6px;
  background: #fff;
  font-size: 33px;
  line-height: 51px;
  font-weight: 700;
}

.map path {
  vector-effect: non-scaling-stroke;
}

.pale { fill: #d6dfc6; }
.forest-haze { fill: #cbdcbc; stroke: #cbdcbc; stroke-width: 18; opacity: 0.75; }
.forest { fill: #aad392; }
.shade { fill: #8fb57a; opacity: 0.65; }
.water { fill: #90badb; }

.stream,
.street,
.highway-edge,
.highway,
.border-glow,
.border,
.casing,
.hidden-part,
.route {
  fill: none;
  stroke-linejoin: round;
  stroke-linecap: round;
}

.stream { stroke: #90c4e6; stroke-width: 3; }
.street { stroke: #fdfefe; stroke-width: 4; }
.highway-edge { stroke: #dededc; stroke-width: 8; }
.highway { stroke: #c7c8ca; stroke-width: 6; }
.border-glow { stroke: #d8d4e6; stroke-width: 9; opacity: 0.75; }
.border { stroke: #b9a5bb; stroke-width: 3; stroke-dasharray: 20 8; }
.casing { stroke: #fff; stroke-width: 14; }
.hidden-part { stroke: #2b2b2b; stroke-width: 9; }
.route { stroke: #e87238; stroke-width: 9; }

.city text {
  fill: #333;
  stroke: #f4f4f2;
  stroke-width: 4;
  paint-order: stroke;
  font-family: Inter, sans-serif;
  font-size: 41px;
  font-weight: 600;
}

.city .big {
  font-size: 44px;
  font-weight: 700;
}

.water-name text {
  fill: #4787d2;
  stroke: #eef3f8;
  stroke-width: 4;
  paint-order: stroke;
  font-family: Inter, sans-serif;
  font-size: 35px;
  font-style: italic;
  font-weight: 600;
}

.credit {
  fill: #fff;
  fill-opacity: 0.8;
  font-size: 20px;
}

/* Overlays */
.scrollbar {
  position: absolute;
  top: 785px;
  right: 9px;
  width: 9px;
  height: 108px;
  border-radius: 5px;
  background: #a3a3a3;
}

.fade {
  position: absolute;
  right: 0;
  bottom: 0;
  left: 0;
  height: 370px;
  background: linear-gradient(rgba(255, 255, 255, 0), rgba(252, 252, 252, 0.08) 70px, rgba(250, 250, 250, 0.3) 150px, rgba(250, 250, 250, 0.76) 250px, rgba(250, 250, 250, 0.84));
  pointer-events: none;
}

/* Bottom navigation */
.dock {
  position: absolute;
  right: 63px;
  bottom: 63px;
  left: 63px;
  display: flex;
  padding: 36px 29px 32px;
  border-radius: 93px;
  background: rgba(255, 255, 255, 0.9);
  backdrop-filter: blur(4px);
  box-shadow: 0 12px 110px rgba(0, 0, 0, 0.11);
}

.dock a {
  position: relative;
  display: flex;
  flex: 1;
  flex-direction: column;
  align-items: center;
  gap: 2px;
  color: #1a1a1a;
  font-size: 33px;
  line-height: 44px;
  font-weight: 700;
  text-decoration: none;
}

.dock .icon {
  stroke: #1a1a1a;
}

.dock .current {
  color: #e05a28;
}

.dock .current::before {
  content: "";
  position: absolute;
  inset: -24px -17px -20px;
  z-index: -1;
  border-radius: 81px;
  background: #ebebeb;
}

.tint {
  position: absolute;
  bottom: 10px;
  left: 18px;
  width: 104px;
  height: 71px;
  border-radius: 30px 60px 30px 80px;
  background: #e4f5f2;
  filter: blur(4px);
}
</style>
